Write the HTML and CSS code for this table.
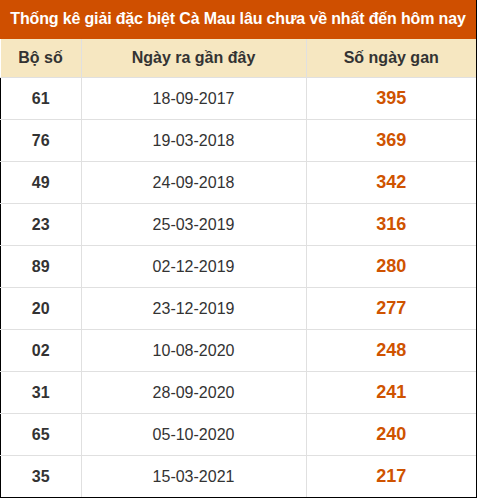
FILE: index.html
```html
<!DOCTYPE html>
<html lang="vi">
<head>
<meta charset="utf-8">
<link rel="stylesheet" href="styles.css">
</head>
<body>
<div class="wrap">
  <div class="title">Thống kê giải đặc biệt Cà Mau lâu chưa về nhất đến hôm nay</div>
  <table class="gan">
    <thead>
      <tr><th class="c1">Bộ số</th><th class="c2">Ngày ra gần đây</th><th class="c3">Số ngày gan</th></tr>
    </thead>
    <tbody>
      <tr><td class="num">61</td><td class="date">18-09-2017</td><td class="days">395</td></tr>
      <tr><td class="num">76</td><td class="date">19-03-2018</td><td class="days">369</td></tr>
      <tr><td class="num">49</td><td class="date">24-09-2018</td><td class="days">342</td></tr>
      <tr><td class="num">23</td><td class="date">25-03-2019</td><td class="days">316</td></tr>
      <tr><td class="num">89</td><td class="date">02-12-2019</td><td class="days">280</td></tr>
      <tr><td class="num">20</td><td class="date">23-12-2019</td><td class="days">277</td></tr>
      <tr><td class="num">02</td><td class="date">10-08-2020</td><td class="days">248</td></tr>
      <tr><td class="num">31</td><td class="date">28-09-2020</td><td class="days">241</td></tr>
      <tr><td class="num">65</td><td class="date">05-10-2020</td><td class="days">240</td></tr>
      <tr><td class="num">35</td><td class="date">15-03-2021</td><td class="days">217</td></tr>
    </tbody>
  </table>
</div>
</body>
</html>
```

FILE: styles.css
```css
html, body {
  margin: 0;
  padding: 0;
  background: #fff;
}
body {
  font-family: "Liberation Sans", Arial, sans-serif;
  color: #333;
}
.wrap {
  width: 477px;
  height: 498px;
  box-sizing: border-box;
  border-right: 1px solid #000;
  overflow: hidden;
}
.title {
  height: 39px;
  line-height: 38px;
  background: #cf4f00;
  color: #fff;
  font-weight: bold;
  font-size: 16px;
  letter-spacing: -0.15px;
  text-align: center;
  white-space: nowrap;
}
.gan {
  width: 476px;
  border-collapse: collapse;
  table-layout: fixed;
}
.gan th, .gan td {
  border: 1px solid #e0e0e0;
  text-align: center;
  padding: 0;
}
.gan tr > :first-child { border-left: 1px solid #000; }
.gan thead th { border-top: none; border-left-color: #f6e7c1; }
.gan thead th.c1 { border-left: none; }
.gan tr > :last-child { border-right: none; }
.gan tbody tr:last-child td { border-bottom: 1px solid #000; }
.gan th {
  background: #f6e7c1;
  height: 38px;
  font-size: 16px;
  font-weight: bold;
  color: #333;
}
.c1 { width: 80px; }
.c2 { width: 224px; }
.gan td { height: 41px; }
.num {
  font-weight: bold;
  font-size: 16px;
  color: #333;
}
.date {
  font-size: 16px;
  color: #333;
}
.days {
  font-weight: bold;
  font-size: 18px;
  color: #cf5300;
}
```
